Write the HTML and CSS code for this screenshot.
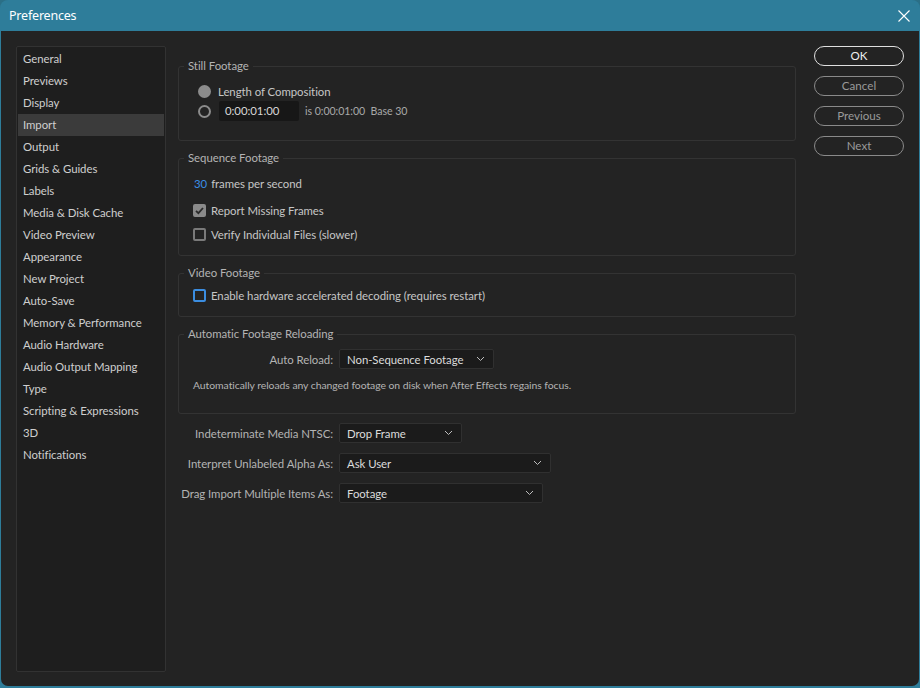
FILE: index.html
```html
<!DOCTYPE html>
<html>
<head>
<meta charset="utf-8">
<link rel="stylesheet" href="styles.css">
</head>
<body>
<div class="window">
  <div class="titlebar">
    <span class="title">Preferences</span>
    <svg class="close" width="12" height="12" viewBox="0 0 12 12"><path d="M0.5 0.5 L11.5 11.5 M11.5 0.5 L0.5 11.5" stroke="#ffffff" stroke-width="1.1" fill="none"/></svg>
  </div>
  <div class="body">
    <ul class="sidebar">
      <li>General</li>
      <li>Previews</li>
      <li>Display</li>
      <li class="active">Import</li>
      <li>Output</li>
      <li>Grids &amp; Guides</li>
      <li>Labels</li>
      <li>Media &amp; Disk Cache</li>
      <li>Video Preview</li>
      <li>Appearance</li>
      <li>New Project</li>
      <li>Auto-Save</li>
      <li>Memory &amp; Performance</li>
      <li>Audio Hardware</li>
      <li>Audio Output Mapping</li>
      <li>Type</li>
      <li>Scripting &amp; Expressions</li>
      <li>3D</li>
      <li>Notifications</li>
    </ul>
    <div class="content">
      <fieldset class="group g-still">
        <legend>Still Footage</legend>
        <div class="row r20"><span class="radio filled"></span><span>Length of Composition</span></div>
        <div class="row r20"><span class="radio"></span><span class="input">0:00:01:00</span><span class="note">is 0:00:01:00&nbsp; Base 30</span></div>
      </fieldset>
      <fieldset class="group g-seq">
        <legend>Sequence Footage</legend>
        <div class="row r18 fps"><span class="num">30</span><span>frames per second</span></div>
        <div class="row r20 chk-row"><span class="check on"><svg width="13" height="13" viewBox="0 0 13 13"><path d="M3 6.8 L5.4 9.2 L10 4" stroke="#2a2a2a" stroke-width="1.8" fill="none"/></svg></span><span>Report Missing Frames</span></div>
        <div class="row r20 chk-row"><span class="check"></span><span>Verify Individual Files (slower)</span></div>
      </fieldset>
      <fieldset class="group g-video">
        <legend>Video Footage</legend>
        <div class="row r20 chk-row"><span class="check focus"></span><span>Enable hardware accelerated decoding (requires restart)</span></div>
      </fieldset>
      <fieldset class="group g-auto">
        <legend>Automatic Footage Reloading</legend>
        <div class="row r20 form-row"><span class="label">Auto Reload:</span><span class="select w154"><span>Non-Sequence Footage</span><svg width="9" height="6" viewBox="0 0 9 6"><path d="M1 1 L4.5 4.5 L8 1" stroke="#bdbdbd" stroke-width="1" fill="none"/></svg></span></div>
        <div class="desc">Automatically reloads any changed footage on disk when After Effects regains focus.</div>
      </fieldset>
      <div class="row r20 form-row"><span class="label">Indeterminate Media NTSC:</span><span class="select w122"><span>Drop Frame</span><svg width="9" height="6" viewBox="0 0 9 6"><path d="M1 1 L4.5 4.5 L8 1" stroke="#bdbdbd" stroke-width="1" fill="none"/></svg></span></div>
      <div class="row r20 form-row"><span class="label">Interpret Unlabeled Alpha As:</span><span class="select w211"><span>Ask User</span><svg width="9" height="6" viewBox="0 0 9 6"><path d="M1 1 L4.5 4.5 L8 1" stroke="#bdbdbd" stroke-width="1" fill="none"/></svg></span></div>
      <div class="row r20 form-row"><span class="label">Drag Import Multiple Items As:</span><span class="select w203"><span>Footage</span><svg width="9" height="6" viewBox="0 0 9 6"><path d="M1 1 L4.5 4.5 L8 1" stroke="#bdbdbd" stroke-width="1" fill="none"/></svg></span></div>
    </div>
    <div class="buttons">
      <button class="btn primary">OK</button>
      <button class="btn">Cancel</button>
      <button class="btn">Previous</button>
      <button class="btn">Next</button>
    </div>
  </div>
</div>
</body>
</html>
```
FILE: styles.css
```css
html, body {
  margin: 0;
  padding: 0;
  background: #2b6f86;
}
.window {
  width: 920px;
  height: 688px;
  background: #2e7d9a;
  border-radius: 8px 8px 0 0;
  display: flex;
  flex-direction: column;
  font-family: Lato, "Open Sans", sans-serif;
  font-size: 11.4px;
  letter-spacing: -0.05px;
  color: #c6c6c6;
  box-sizing: border-box;
}
.titlebar {
  height: 31px;
  flex: none;
  display: flex;
  align-items: center;
  justify-content: space-between;
  padding: 0 10px 0 9px;
}
.title {
  color: #ffffff;
  font-family: "Noto Sans", "Open Sans", sans-serif;
  font-size: 12.5px;
  letter-spacing: -0.2px;
}
.close { display: block; }
.body {
  flex: 1;
  margin: 0 1px 2px 1px;
  background: #232323;
  border-radius: 0 0 7px 7px;
  display: flex;
  padding: 15px 16px 14px 15px;
  box-sizing: border-box;
  min-height: 0;
}
.sidebar {
  list-style: none;
  margin: 0;
  padding: 1px;
  width: 150px;
  flex: none;
  box-sizing: border-box;
  background: #1e1e1e;
  border: 1px solid #323232;
  border-radius: 2px;
}
.sidebar li {
  height: 22px;
  line-height: 22px;
  padding-left: 5px;
  color: #cfcfcf;
  white-space: nowrap;
}
.sidebar li.active {
  background: #3b3b3b;
}
.content {
  width: 618px;
  margin-left: 12px;
  flex: none;
  display: flex;
  flex-direction: column;
}
.group {
  margin: 0 0 9px 0;
  padding: 0 0 0 14px;
  border: 1px solid #333333;
  border-radius: 3px;
  min-width: 0;
}
.group legend {
  margin-left: -9px;
  padding: 0 4px;
  line-height: 16px;
  color: #b4b4b4;
}
.g-still { margin-top: 12px; padding-top: 7px; padding-bottom: 19px; padding-left: 15px; }
.g-still legend { margin-left: -10px; }
.g-seq { padding-top: 8px; padding-bottom: 11px; }
.g-video { padding-top: 4px; padding-bottom: 11px; }
.g-auto { padding-top: 7px; padding-bottom: 20px; }
.row {
  display: flex;
  align-items: center;
  white-space: nowrap;
}
.r20 { height: 20px; }
.r18 { height: 18px; }
.g-seq .fps { margin-bottom: 8px; }
.g-seq .chk-row + .chk-row { margin-top: 4px; }
.radio {
  width: 13px;
  height: 13px;
  box-sizing: border-box;
  border-radius: 50%;
  border: 2px solid #8c8c8c;
  margin-right: 7px;
  margin-left: 4px;
  flex: none;
}
.radio.filled { background: #8c8c8c; }
.input {
  width: 80px;
  height: 20px;
  box-sizing: border-box;
  background: #171717;
  border-radius: 2px;
  line-height: 20px;
  padding-left: 6px;
  color: #d8d8d8;
  margin-left: 1px;
}
.note {
  margin-left: 6px;
  color: #a8a8a8;
  font-size: 10.6px;
}
.num { color: #3a8ee6; margin-right: 4px; margin-left: 1px; }
.check {
  width: 13px;
  height: 13px;
  box-sizing: border-box;
  border: 2px solid #7a7a7a;
  border-radius: 2px;
  margin-right: 5px;
  flex: none;
  position: relative;
}
.check.on {
  background: #8a8a8a;
  border-color: #8a8a8a;
}
.check.on svg {
  position: absolute;
  left: -2px;
  top: -2px;
}
.check.focus { border-color: #3b8de0; }
.form-row .label {
  width: 155px;
  text-align: right;
  color: #b4b4b4;
  margin-right: 6px;
  flex: none;
}
.g-auto .form-row .label { width: 140px; }
.select {
  height: 20px;
  box-sizing: border-box;
  background: #1b1b1b;
  border: 1px solid #303030;
  border-radius: 2px;
  display: flex;
  align-items: center;
  justify-content: space-between;
  padding: 0 8px 0 7px;
  color: #dcdcdc;
}
.w154 { width: 155px; }
.w122 { width: 123px; }
.w211 { width: 212px; }
.w203 { width: 204px; }
.desc {
  margin-top: 9px;
  font-size: 10.4px;
  color: #b4b4b4;
  line-height: 15px;
}
.content > .form-row { margin-bottom: 10px; }
.buttons {
  margin-left: 18px;
  display: flex;
  flex-direction: column;
  gap: 10px;
}
.btn {
  width: 90px;
  height: 20px;
  box-sizing: border-box;
  border-radius: 10px;
  border: 1px solid #8a8a8a;
  background: transparent;
  color: #9a9a9a;
  font-family: Lato, "Open Sans", sans-serif;
  font-size: 11.6px;
  padding: 0;
  line-height: 18px;
}
.btn.primary {
  border-color: #e0e0e0;
  color: #f0f0f0;
}
```
